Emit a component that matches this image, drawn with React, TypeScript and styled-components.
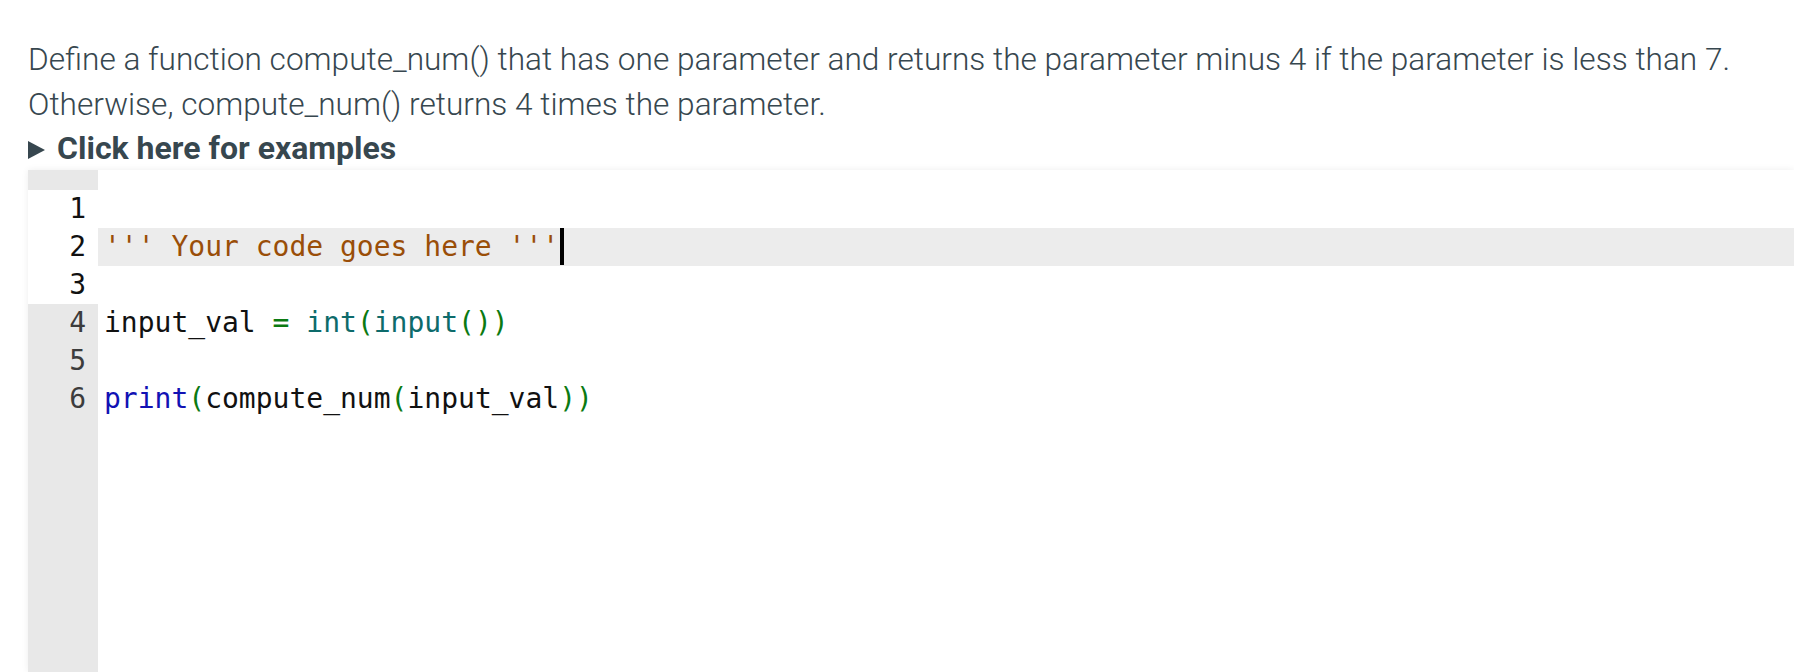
import React from 'react';
import styled, { createGlobalStyle } from 'styled-components';

const GlobalStyle = createGlobalStyle`
  html, body {
    margin: 0;
    padding: 0;
    background: #fff;
    overflow: hidden;
  }
`;

const Page = styled.div`
  padding: 37px 0 0 28px;
  height: 672px;
  box-sizing: border-box;
  display: flex;
  flex-direction: column;
  font-family: Roboto, 'Liberation Sans', sans-serif;
  color: #37474f;
`;

const Description = styled.p`
  margin: 0;
  font-size: 31.6px;
  font-weight: 300;
  line-height: 45px;
  white-space: nowrap;
`;

const Summary = styled.div`
  display: flex;
  align-items: center;
  gap: 12px;
  height: 43px;
  font-size: 32px;
  font-weight: 700;
  line-height: 45px;
  cursor: pointer;
`;

const Marker = styled.span`
  width: 0;
  height: 0;
  border-top: 9.5px solid transparent;
  border-bottom: 9.5px solid transparent;
  border-left: 17px solid #37474f;
  margin-top: 3px;
`;

const Editor = styled.div`
  flex: 1;
  display: flex;
  background: #fff;
  box-shadow: 0 0 7px rgba(0, 0, 0, 0.07);
  font-family: 'DejaVu Sans Mono', 'Liberation Mono', monospace;
  font-size: 28px;
  line-height: 38px;
`;

const Gutter = styled.div`
  width: 70px;
  flex-shrink: 0;
  padding-top: 20px;
  background: #e8e8e8;
`;

const LineNumber = styled.div<{ $active?: boolean }>`
  height: 38px;
  padding-right: 12px;
  text-align: right;
  background: ${(p) => (p.$active ? '#fff' : 'transparent')};
  color: ${(p) => (p.$active ? '#111' : '#3c3c3c')};
`;

const Code = styled.div`
  flex: 1;
  padding-top: 20px;
`;

const Line = styled.div<{ $highlight?: boolean }>`
  height: 38px;
  padding-left: 6px;
  white-space: pre;
  color: #111;
  background: ${(p) => (p.$highlight ? '#ececec' : 'transparent')};
`;

const Str = styled.span`
  color: #9a4e08;
`;

const Builtin = styled.span`
  color: #0d6b6b;
`;

const Punct = styled.span`
  color: #0b7a12;
`;

const Keyword = styled.span`
  color: #1212b4;
`;

const Cursor = styled.span`
  display: inline-block;
  width: 4px;
  height: 37px;
  margin-left: 1px;
  vertical-align: top;
  background: #000;
`;

const App: React.FC = () => {
  const numbers = [1, 2, 3, 4, 5, 6];

  return (
    <>
      <GlobalStyle />
      <Page>
        <Description>
          Define a function compute_num() that has one parameter and returns the parameter minus 4 if the
          parameter is less than 7.
          <br />
          Otherwise, compute_num() returns 4 times the parameter.
        </Description>
        <Summary>
          <Marker />
          Click here for examples
        </Summary>
        <Editor>
          <Gutter>
            {numbers.map((n) => (
              <LineNumber key={`ln-${n}`} $active={n <= 3}>
                {n}
              </LineNumber>
            ))}
          </Gutter>
          <Code>
            <Line />
            <Line $highlight>
              <Str>''' Your code goes here '''</Str>
              <Cursor />
            </Line>
            <Line />
            <Line>
              input_val <Punct>=</Punct> <Builtin>int</Builtin>
              <Punct>(</Punct>
              <Builtin>input</Builtin>
              <Punct>())</Punct>
            </Line>
            <Line />
            <Line>
              <Keyword>print</Keyword>
              <Punct>(</Punct>compute_num<Punct>(</Punct>input_val<Punct>))</Punct>
            </Line>
          </Code>
        </Editor>
      </Page>
    </>
  );
};

export default App;
